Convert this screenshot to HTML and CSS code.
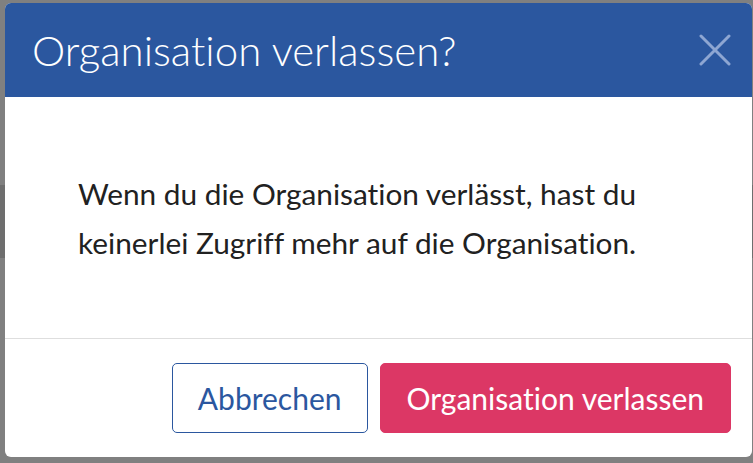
FILE: index.html
```html
<!DOCTYPE html>
<html lang="de">
<head>
<meta charset="utf-8">
<title>Organisation verlassen?</title>
<link rel="stylesheet" href="styles.css">
</head>
<body>
<div class="dialog" role="dialog" aria-labelledby="dlg-title">
  <header class="dialog-header">
    <h1 id="dlg-title" class="dialog-title">Organisation verlassen?</h1>
    <button class="close-btn" aria-label="Schließen">
      <svg width="32" height="32" viewBox="0 0 32 32" aria-hidden="true">
        <path d="M2 2 L30 30 M30 2 L2 30" stroke="currentColor" stroke-width="3" stroke-linecap="round" fill="none"/>
      </svg>
    </button>
  </header>
  <div class="dialog-body">
    <p class="dialog-text">Wenn du die Organisation verlässt, hast du<br>keinerlei Zugriff mehr auf die Organisation.</p>
  </div>
  <footer class="dialog-footer">
    <button class="btn btn-outline">Abbrechen</button>
    <button class="btn btn-danger">Organisation verlassen</button>
  </footer>
</div>
</body>
</html>
```
FILE: styles.css
```css
html, body {
  margin: 0;
  height: 100%;
}
body {
  font-family: Lato, "Noto Sans", sans-serif;
  font-variant-ligatures: none;
  background: linear-gradient(to bottom, #808080 0, #808080 185px, #6e6e6e 185px, #6e6e6e 258px, #808080 258px);
  padding: 3px 1px 0 5px;
  box-sizing: border-box;
  overflow: hidden;
}
.dialog {
  background: #fff;
  border-radius: 6px;
  overflow: hidden;
  width: 747px;
  display: flex;
  flex-direction: column;
}
.dialog-header {
  background: #2b579f;
  height: 94px;
  display: flex;
  align-items: center;
  justify-content: space-between;
  padding: 0 21px 0 27px;
  box-sizing: border-box;
}
.dialog-title {
  margin: 0;
  color: #fff;
  font-weight: 300;
  font-size: 42px;
  line-height: 1;
}
.close-btn {
  background: none;
  border: 0;
  padding: 0;
  color: #8ea6d2;
  display: flex;
  cursor: pointer;
}
.dialog-body {
  height: 241px;
  padding: 0 0 0 73px;
  box-sizing: border-box;
  display: flex;
  align-items: center;
}
.dialog-text {
  margin: 0;
  color: #212121;
  font-size: 29.8px;
  line-height: 49px;
}
.dialog-footer {
  border-top: 1px solid #dedede;
  display: flex;
  justify-content: flex-end;
  gap: 12px;
  padding: 24px 21px 24px 0;
}
.btn {
  font-family: inherit;
  font-variant-ligatures: none;
  font-size: 30px;
  height: 70px;
  border-radius: 5px;
  cursor: pointer;
}
.btn-outline {
  background: #fff;
  color: #2b579f;
  border: 1px solid #2b579f;
  padding: 0 25px;
}
.btn-danger {
  background: #dc3765;
  color: #fff;
  border: 1px solid #dc3765;
  padding: 0 26px;
}
```
